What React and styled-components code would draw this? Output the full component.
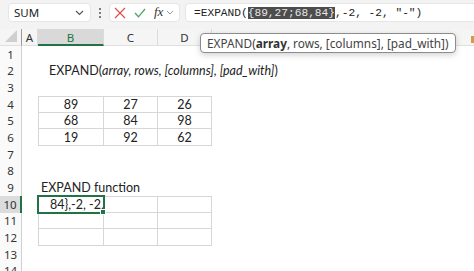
import React from 'react';
import styled, { createGlobalStyle } from 'styled-components';

const GlobalStyle = createGlobalStyle`
  html, body {
    margin: 0;
    padding: 0;
    background: #fff;
    overflow: hidden;
  }
  body {
    font-family: Lato, "Liberation Sans", sans-serif;
  }
`;

const GREEN = '#217346';
const columns = ['A', 'B', 'C', 'D', ''];

const table1 = [
  [89, 27, 26],
  [68, 84, 98],
  [19, 92, 62],
];

const App = () => {
  const rows = Array.from({ length: 14 }, (_, i) => i + 1);

  const renderRow = (r) => {
    const cells = [];
    for (let c = 0; c < 5; c++) {
      const col = columns[c];
      let content = null;
      let boxed = false;
      let top = false;
      let left = false;
      let align = 'left';
      let pad = 3;
      let selected = false;

      if (r === 2 && col === 'B') {
        content = (
          <>
            EXPAND(<i>array, rows, [columns], [pad_with]</i> )
          </>
        );
        pad = 11;
      }
      if (r >= 4 && r <= 6 && c >= 1 && c <= 3) {
        boxed = true;
        top = r === 4;
        left = c === 1;
        align = 'center';
        content = table1[r - 4][c - 1];
      }
      if (r === 9 && col === 'B') {
        content = 'EXPAND function';
      }
      if (r >= 10 && r <= 12 && c >= 1 && c <= 3) {
        boxed = true;
        top = r === 10;
        left = c === 1;
      }
      if (r === 10 && col === 'B') {
        selected = true;
        content = '84},-2, -2,';
        pad = 11;
      }

      cells.push(
        <Cell
          key={c}
          $boxed={boxed}
          $top={top}
          $left={left}
          $align={align}
          $pad={pad}
          $selected={selected}
        >
          {content}
        </Cell>
      );
    }
    return cells;
  };

  return (
    <Page>
      <GlobalStyle />
      <TopBar>
        <NameBox>
          <span>SUM</span>
          <svg width="9" height="6" viewBox="0 0 9 6">
            <path d="M1 1 L4.5 4.5 L8 1" fill="none" stroke="#555" strokeWidth="1.2" />
          </svg>
        </NameBox>
        <Dots>
          <i />
          <i />
          <i />
        </Dots>
        <FxGroup>
          <svg width="12" height="12" viewBox="0 0 12 12">
            <path d="M1 1 L11 11 M11 1 L1 11" stroke="#e0524f" strokeWidth="1.3" />
          </svg>
          <svg width="12" height="10" viewBox="0 0 12 10">
            <path d="M1 5 L4.5 8.8 L11 1" fill="none" stroke="#4fa36a" strokeWidth="1.3" />
          </svg>
          <FxLabel>fx</FxLabel>
          <svg width="8" height="5" viewBox="0 0 8 5">
            <path d="M1 1 L4 4 L7 1" fill="none" stroke="#999" strokeWidth="1" />
          </svg>
        </FxGroup>
        <FormulaBox>
          =EXPAND(<Highlight>{'{89,27;68,84}'}</Highlight>,-2, -2, "-")
        </FormulaBox>
      </TopBar>

      <Sheet>
        <Corner>
          <svg width="12" height="12" viewBox="0 0 12 12">
            <path d="M12 0 L12 12 L0 12 Z" fill="#cfcfcf" />
          </svg>
        </Corner>
        {columns.map((col, i) => (
          <ColHead key={col + i} $active={col === 'B'} $last={i === columns.length - 1}>
            {col}
            {i === columns.length - 1 && <Marker />}
          </ColHead>
        ))}
        {rows.map((r) => (
          <React.Fragment key={r}>
            <RowHead $active={r === 10}>{r}</RowHead>
            {renderRow(r)}
          </React.Fragment>
        ))}
      </Sheet>

      <Tooltip>
        EXPAND(<b>array</b>, rows, [columns], [pad_with])
      </Tooltip>
    </Page>
  );
};

const Page = styled.div`
  position: relative;
  width: 474px;
  height: 271px;
  overflow: hidden;
`;

const TopBar = styled.div`
  display: flex;
  align-items: flex-start;
  height: 29px;
  box-sizing: border-box;
  padding: 3px 0 0 8px;
  background: #f3f3f3;
`;

const NameBox = styled.div`
  display: flex;
  align-items: center;
  justify-content: space-between;
  box-sizing: border-box;
  width: 83px;
  height: 19px;
  padding: 0 6px 0 5px;
  background: #fff;
  border: 1px solid #e6e6e6;
  border-radius: 4px;
  font-family: "Noto Sans", "Open Sans", sans-serif;
  font-size: 11.5px;
  color: #222;
`;

const Dots = styled.div`
  display: flex;
  flex-direction: column;
  align-items: center;
  justify-content: center;
  gap: 2px;
  width: 18px;
  height: 19px;

  i {
    display: block;
    width: 2px;
    height: 2px;
    border-radius: 1px;
    background: #555;
  }
`;

const FxGroup = styled.div`
  display: flex;
  align-items: center;
  gap: 8px;
  box-sizing: border-box;
  width: 71px;
  height: 19px;
  padding: 0 0 0 4px;
  background: #fff;
  border: 1px solid #e6e6e6;
  border-radius: 4px;
`;

const FxLabel = styled.span`
  font-family: "Liberation Serif", serif;
  font-style: italic;
  font-size: 13px;
  color: #333;
  margin: -2px -5px 0 0;
`;

const FormulaBox = styled.div`
  flex: 1;
  display: flex;
  align-items: center;
  box-sizing: border-box;
  height: 19px;
  margin: 0 -10px 0 5px;
  padding-left: 8px;
  background: #fff;
  border: 1px solid #e6e6e6;
  border-radius: 4px;
  font-family: "Liberation Mono", monospace;
  font-size: 11.2px;
  color: #222;
  white-space: pre;
`;

const Highlight = styled.span`
  background: #4d4d4d;
  color: #e6e6e6;
`;

const Sheet = styled.div`
  display: grid;
  grid-template-columns: 22px 16px 66px 54px 54px 1fr;
  grid-template-rows: 17px;
  grid-auto-rows: 16.67px;
  font-family: Lato, "Liberation Sans", sans-serif;
  font-size: 12.5px;
  color: #222;
`;

const Corner = styled.div`
  display: flex;
  align-items: flex-end;
  justify-content: flex-end;
  padding: 0 4px 3px 0;
  background: #f5f5f5;
  border-right: 1px solid #9a9a9a;
  border-bottom: 1px solid #e0e0e0;
`;

const ColHead = styled.div`
  display: flex;
  align-items: center;
  justify-content: ${(p) => (p.$last ? 'flex-end' : 'center')};
  box-sizing: border-box;
  background: ${(p) => (p.$active ? '#d9d9d9' : '#f5f5f5')};
  color: ${(p) => (p.$active ? GREEN : '#333')};
  font-family: "Noto Sans", "Open Sans", sans-serif;
  font-size: 11.5px;
  border-right: ${(p) => (p.$last ? 'none' : '1px solid #dcdcdc')};
  border-bottom: ${(p) => (p.$active ? `2px solid ${GREEN}` : '1px solid #e0e0e0')};
  padding-top: ${(p) => (p.$active ? '1px' : '0')};
`;

const Marker = styled.span`
  display: block;
  width: 3px;
  height: 7px;
  margin-top: 4px;
  background: #d39a4c;
`;

const RowHead = styled.div`
  display: flex;
  align-items: center;
  justify-content: center;
  box-sizing: border-box;
  background: ${(p) => (p.$active ? '#dcdcdc' : '#fafafa')};
  border-right: ${(p) => (p.$active ? `2px solid ${GREEN}` : '1px solid #d0d0d0')};
  font-family: "Noto Sans", "Open Sans", sans-serif;
  font-size: 11.5px;
  color: #333;
`;

const Cell = styled.div`
  position: relative;
  display: flex;
  align-items: center;
  justify-content: ${(p) => (p.$align === 'center' ? 'center' : 'flex-start')};
  box-sizing: border-box;
  padding-left: ${(p) => (p.$align === 'center' ? 0 : p.$pad)}px;
  white-space: nowrap;
  overflow: visible;
  border-right: ${(p) => (p.$boxed ? '1px solid #d6d6d6' : 'none')};
  border-bottom: ${(p) => (p.$boxed ? '1px solid #d6d6d6' : 'none')};
  border-top: ${(p) => (p.$top ? '1px solid #d6d6d6' : 'none')};
  border-left: ${(p) => (p.$left ? '1px solid #d6d6d6' : 'none')};
  outline: ${(p) => (p.$selected ? `2px solid ${GREEN}` : 'none')};
  outline-offset: -1px;
  z-index: ${(p) => (p.$selected ? 1 : 0)};

  &::after {
    content: '';
    display: ${(p) => (p.$selected ? 'block' : 'none')};
    position: absolute;
    right: -3px;
    bottom: -3px;
    width: 4px;
    height: 4px;
    background: ${GREEN};
    border: 1px solid #fff;
  }
`;

const Tooltip = styled.div`
  position: absolute;
  left: 200px;
  top: 33px;
  width: 256px;
  height: 20px;
  box-sizing: border-box;
  display: flex;
  align-items: center;
  padding-left: 6px;
  background: #fff;
  border: 1px solid #8c8c8c;
  border-radius: 4px;
  box-shadow: 0 2px 6px rgba(0, 0, 0, 0.18);
  font-family: "Noto Sans", "Open Sans", sans-serif;
  font-size: 11.8px;
  color: #444;
  white-space: nowrap;

  b {
    color: #333;
  }
`;

export default App;
